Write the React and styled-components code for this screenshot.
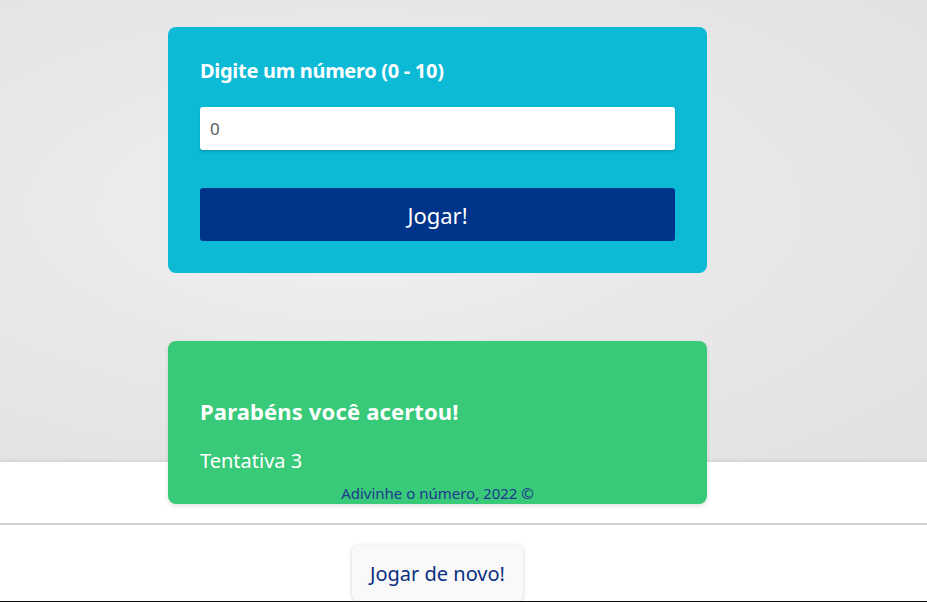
import React from "react";
import styled, { createGlobalStyle } from "styled-components";

const Global = createGlobalStyle`
  html, body { margin: 0; padding: 0; }
  body {
    font-family: "Noto Sans", "Open Sans", sans-serif;
    background: #ffffff;
  }
  * { box-sizing: border-box; }
`;

const Page = styled.div`
  width: 927px;
  height: 602px;
  display: flex;
  flex-direction: column;
  overflow: hidden;
`;

const Main = styled.main`
  height: 461px;
  flex: none;
  background: radial-gradient(ellipse at 38% 45%, #f2f2f2 0%, #e9e9e9 40%, #e1e1e1 100%);
  display: flex;
  flex-direction: column;
  align-items: center;
  padding: 27px 52px 0 0;
  gap: 68px;
`;

const Card = styled.section`
  position: relative;
  z-index: 1;
  width: 539px;
  flex: none;
  height: ${(p) => p.$h}px;
  background: ${(p) => p.$bg};
  border-radius: 8px;
  padding: ${(p) => p.$pad};
  display: flex;
  flex-direction: column;
  box-shadow: ${(p) => (p.$shadow ? "0 2px 4px rgba(0,0,0,0.12)" : "none")};
`;

const Label = styled.label`
  color: #ffffff;
  font-weight: 700;
  font-size: 20px;
  line-height: 24px;
  letter-spacing: -0.3px;
  margin-bottom: 24px;
`;

const Input = styled.input`
  width: 475px;
  height: 43px;
  border: none;
  border-radius: 3px;
  background: #ffffff;
  box-shadow: 0 2px 3px rgba(0, 0, 0, 0.15);
  padding: 0 10px;
  font-family: inherit;
  font-size: 17px;
  color: #5a5a5a;
  outline: none;
  margin-bottom: 38px;
`;

const PlayButton = styled.button`
  width: 475px;
  height: 53px;
  border: none;
  border-radius: 3px;
  background: #00338a;
  color: #ffffff;
  font-family: inherit;
  font-size: 22px;
  cursor: pointer;
`;

const ResultTitle = styled.h2`
  margin: 0 0 24px;
  color: #ffffff;
  font-size: 22px;
  line-height: 28px;
  font-weight: 700;
  letter-spacing: 0.15px;
`;

const ResultText = styled.p`
  margin: 0;
  color: #ffffff;
  font-size: 20px;
  line-height: 24px;
`;

const Footer = styled.footer`
  position: relative;
  height: 64px;
  flex: none;
  background: #ffffff;
  border-top: 1px solid #d6d6d6;
  border-bottom: 2px solid #d0d0d0;
  box-shadow: 0 -1px 3px rgba(0, 0, 0, 0.06);
  display: flex;
  align-items: center;
  justify-content: center;
  padding-right: 52px;
`;

const FooterText = styled.span`
  position: relative;
  z-index: 2;
  color: #1e3a8f;
  font-size: 15px;
  margin-top: 1px;
`;

const Bottom = styled.div`
  flex: 1;
  display: flex;
  justify-content: center;
  align-items: flex-start;
  padding: 20px 52px 0 0;
  border-bottom: 1px solid #111;
  overflow: hidden;
`;

const AgainButton = styled.button`
  width: 171px;
  height: 56px;
  border: none;
  border-radius: 6px;
  background: #f9f9f9;
  box-shadow: 0 1px 4px rgba(0, 0, 0, 0.18);
  color: #0a2f80;
  font-family: inherit;
  font-size: 20px;
  cursor: pointer;
`;

export default function App() {
  return (
    <Page>
      <Global />
      <Main>
        <Card $bg="#0cbad6" $h={246} $pad="32px 32px">
          <Label>Digite um número (0 - 10)</Label>
          <Input defaultValue="0" />
          <PlayButton>Jogar!</PlayButton>
        </Card>
        <Card $bg="#38c979" $h={163} $pad="56px 32px" $shadow>
          <ResultTitle>Parabéns você acertou!</ResultTitle>
          <ResultText>Tentativa 3</ResultText>
        </Card>
      </Main>
      <Footer>
        <FooterText>Adivinhe o número, 2022 ©</FooterText>
      </Footer>
      <Bottom>
        <AgainButton>Jogar de novo!</AgainButton>
      </Bottom>
    </Page>
  );
}
